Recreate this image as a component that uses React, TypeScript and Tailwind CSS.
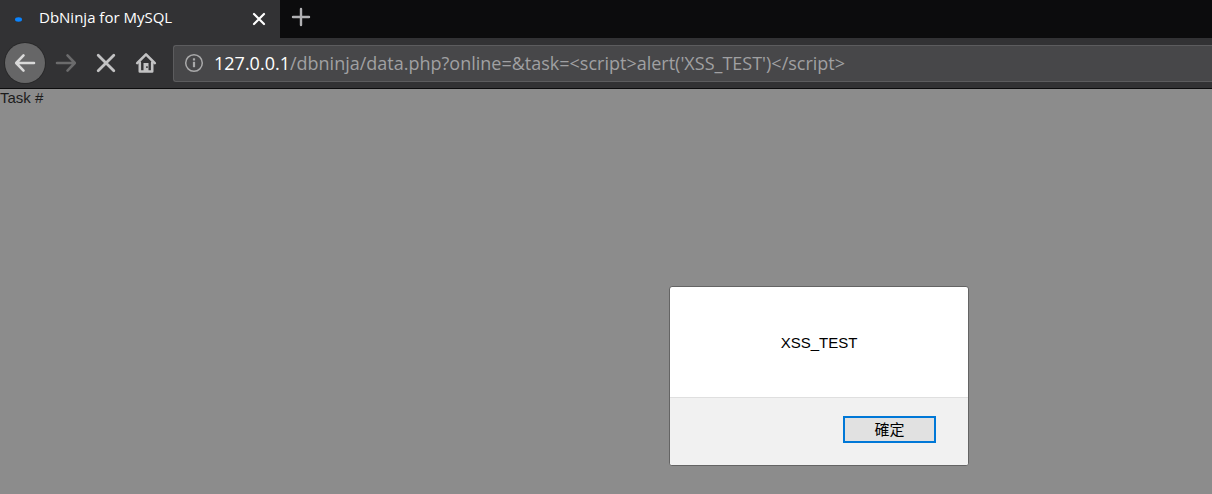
import { useState } from "react";

function BackIcon() {
  return (
    <svg width="22" height="20" viewBox="0 0 22 20" fill="none" stroke="currentColor" strokeWidth="2.6" strokeLinecap="round" strokeLinejoin="round" aria-hidden="true">
      <path d="M9.5 2.4 2.2 10l7.3 7.6M2.6 10H20" />
    </svg>
  );
}

function ForwardIcon() {
  return (
    <svg width="22" height="20" viewBox="0 0 22 20" fill="none" stroke="currentColor" strokeWidth="2.6" strokeLinecap="round" strokeLinejoin="round" aria-hidden="true">
      <path d="m12.5 2.4 7.3 7.6-7.3 7.6M19.4 10H2" />
    </svg>
  );
}

function StopIcon() {
  return (
    <svg width="20" height="20" viewBox="0 0 20 20" fill="none" stroke="currentColor" strokeWidth="2.8" strokeLinecap="round" aria-hidden="true">
      <path d="m2.2 2.2 15.6 15.6M17.8 2.2 2.2 17.8" />
    </svg>
  );
}

function HomeIcon() {
  return (
    <svg width="22" height="22" viewBox="0 0 22 22" fill="none" stroke="currentColor" strokeWidth="2.6" strokeLinecap="round" strokeLinejoin="round" aria-hidden="true">
      <path d="m2.2 11.2 8.8-8.8 8.8 8.8" />
      <path d="M4.8 10.5v9h12.4v-9" />
      <path fill="currentColor" stroke="none" fillRule="evenodd" d="M8.5 11h5v9h-5zM11.2 14.2v1.8h1.5v-1.8z" />
    </svg>
  );
}

function InfoIcon() {
  return (
    <svg width="20" height="20" viewBox="0 0 20 20" fill="none" stroke="currentColor" aria-hidden="true">
      <circle cx="10" cy="10" r="8.3" strokeWidth="1.5" />
      <path d="M10 8.8v5.4" strokeWidth="2.2" />
      <path d="M10 5.3v2.2" strokeWidth="2.2" />
    </svg>
  );
}

function TabBar() {
  return (
    <header className="flex h-[38px] bg-[#0c0c0d]">
      <div className="flex w-[280px] items-center bg-[#323234] pr-3 pl-[15px] text-white">
        <svg width="7" height="5" viewBox="0 0 7 5" aria-hidden="true">
          <ellipse cx="3.5" cy="2.5" rx="3.5" ry="2.2" fill="#0a84ff" />
        </svg>
        <span className="ml-[17px] flex-1 truncate pb-1 text-[15px] leading-5">DbNinja for MySQL</span>
        <button type="button" aria-label="Close tab" className="flex h-[18px] w-[18px] items-center justify-center">
          <svg width="14" height="14" viewBox="0 0 14 14" fill="none" stroke="currentColor" strokeWidth="2.2" strokeLinecap="round" aria-hidden="true">
            <path d="m2 2 10 10M12 2 2 12" />
          </svg>
        </button>
      </div>
      <button type="button" aria-label="New tab" className="flex w-[42px] items-center justify-center pb-1 text-[#b1b1b3]">
        <svg width="20" height="20" viewBox="0 0 20 20" fill="none" stroke="currentColor" strokeWidth="2.4" strokeLinecap="round" aria-hidden="true">
          <path d="M10 2v16M2 10h16" />
        </svg>
      </button>
    </header>
  );
}

function Toolbar() {
  const [path, setPath] = useState("/dbninja/data.php?online=&task=<script>alert('XSS_TEST')</script>");
  return (
    <nav className="flex h-[51px] items-center border-b border-[#0c0c0d] bg-[#323234] pl-[5px] text-[#c2c2c3]">
      <button type="button" aria-label="Back" className="mr-px flex size-10 items-center justify-center rounded-full bg-[#666667] text-[#d9d9d9] ring-1 ring-[#29292a]">
        <BackIcon />
      </button>
      <button type="button" aria-label="Forward" disabled className="flex size-10 items-center justify-center text-[#6b6b6c]">
        <ForwardIcon />
      </button>
      <button type="button" aria-label="Stop" className="flex size-10 items-center justify-center">
        <StopIcon />
      </button>
      <button type="button" aria-label="Home" className="flex size-10 items-center justify-center">
        <HomeIcon />
      </button>
      <div className="ml-[7px] flex h-[37px] min-w-0 flex-1 items-center rounded-l-[3px] border border-r-0 border-[#5c5c5e] bg-[#474749] pl-[10px] text-[18px] leading-6">
        <button type="button" aria-label="Site information" className="text-[#a9a9aa]">
          <InfoIcon />
        </button>
        <label htmlFor="address" className="ml-[10px] text-white">127.0.0.1</label>
        <input
          id="address"
          type="text"
          spellCheck={false}
          value={path}
          onChange={(event) => setPath(event.target.value)}
          className="min-w-0 flex-1 bg-transparent text-[#a0a0a2] outline-none"
        />
      </div>
    </nav>
  );
}

function AlertDialog({ onClose }: { onClose: () => void }) {
  return (
    <div
      role="alertdialog"
      aria-modal="true"
      aria-describedby="alert-message"
      className="absolute top-[197px] left-[669px] w-[300px] overflow-hidden rounded-[3px] border border-[#646464] bg-white font-['Liberation_Sans','Noto_Sans_CJK_TC',sans-serif] text-[15px] text-black"
    >
      <p id="alert-message" className="px-8 pt-[46px] pb-11 text-center leading-5">XSS_TEST</p>
      <div className="flex justify-end border-t border-[#dfdfdf] bg-[#f1f1f1] px-8 pt-[18px] pb-[22px]">
        <button type="button" onClick={onClose} className="flex h-[27px] w-[93px] items-center justify-center border-2 border-[#0078d7] bg-[#e1e1e1] leading-5">
          確定
        </button>
      </div>
    </div>
  );
}

export default function App() {
  const [open, setOpen] = useState(true);
  return (
    <div className="flex min-h-screen flex-col font-['Open_Sans','Noto_Sans',sans-serif]">
      <TabBar />
      <Toolbar />
      <main className="relative flex-1 bg-[#8c8c8c]">
        <p className="font-['Liberation_Sans',sans-serif] text-[15px] leading-[18px] text-[#1c1c1c]">Task #</p>
        {open && <AlertDialog onClose={() => setOpen(false)} />}
      </main>
    </div>
  );
}
